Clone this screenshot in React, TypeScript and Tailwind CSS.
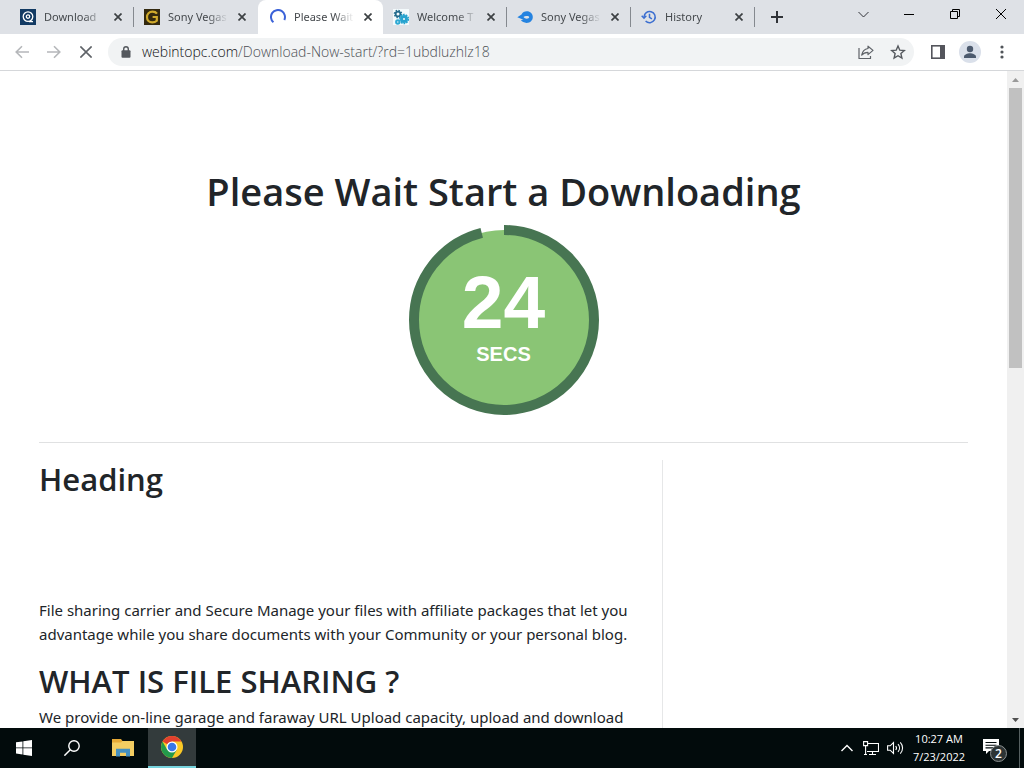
import type { ReactNode } from 'react';

interface Tab {
  title: string;
  icon: ReactNode;
  active?: boolean;
  separator?: boolean;
}

const tabs: Tab[] = [
  {
    title: 'Download',
    separator: true,
    icon: (
      <svg className="w-4 h-4 shrink-0" viewBox="0 0 16 16">
        <rect width="16" height="16" fill="#123a63" />
        <circle cx="8" cy="7.6" r="4.800" fill="none" stroke="#fff" strokeWidth="1.3" />
        <circle cx="8" cy="7.6" r="1.7" fill="none" stroke="#fff" strokeWidth="1.3" />
        <path d="M9 12.6h4" stroke="#fff" strokeWidth="1.3" />
      </svg>
    ),
  },
  {
    title: 'Sony Vegas',
    icon: (
      <svg className="w-4 h-4 shrink-0" viewBox="0 0 16 16">
        <rect width="16" height="16" fill="#33290f" />
        <path d="M13 4.6C12 3.2 10.300 2.600 8.500 2.600 5.200 2.600 3 5 3 8.200s2.200 5.200 5.300 5.200c1.800 0 3.400-.6 4.500-1.600V8H8.600" fill="none" stroke="#d0aa2c" strokeWidth="2.200" />
      </svg>
    ),
  },
  {
    title: 'Please Wait',
    active: true,
    icon: (
      <svg className="w-4 h-4 shrink-0" viewBox="0 0 16 16">
        <path d="M3.400 13.300A7 7 0 1 1 14.300 11" fill="none" stroke="#3b62d8" strokeWidth="2" />
      </svg>
    ),
  },
  {
    title: 'Welcome T',
    separator: true,
    icon: (
      <svg className="w-4 h-4 shrink-0" viewBox="0 0 16 16">
        <rect width="16" height="16" fill="#f4fafc" />
        <circle cx="5" cy="5" r="2.400" fill="none" stroke="#236a8c" strokeWidth="1.800" />
        <circle cx="5" cy="5" r="3.700" fill="none" stroke="#236a8c" strokeWidth="1.200" strokeDasharray="1.500 1.400" />
        <circle cx="11" cy="10" r="2.500" fill="none" stroke="#27a3cf" strokeWidth="3" />
        <circle cx="11" cy="10" r="4.500" fill="none" stroke="#27a3cf" strokeWidth="1.400" strokeDasharray="1.800 1" />
        <circle cx="4.800" cy="13" r="1.700" fill="none" stroke="#2fa9d3" strokeWidth="2" />
      </svg>
    ),
  },
  {
    title: 'Sony Vegas',
    separator: true,
    icon: (
      <svg className="w-4 h-4 shrink-0" viewBox="0 0 16 16">
        <path fillRule="evenodd" d="M.3 8.300 4.500 5.400C5.600 3.400 7.400 2.300 9.800 2.300c3.500 0 6 2.500 6 5.800 0 3.500-2.600 5.800-6.200 5.800-2.500 0-4.600-1-5.700-2.800l2.600-.4L.3 8.300Zm6.200-.3c1-.8 2-1 3.200-1 1.600 0 2.500.5 2.500 1.300 0 .9-1 1.400-2.500 1.400-1.300 0-2.300-.7-3.200-1.700Z" fill="#2583e0" />
      </svg>
    ),
  },
  {
    title: 'History',
    separator: true,
    icon: (
      <svg className="w-4 h-4 shrink-0" viewBox="0 0 16 16" fill="none" stroke="#3c6fd0" strokeWidth="1.500">
        <path d="M3 8a5.600 5.600 0 1 1 1.600 4" />
        <path d="M.7 6.800 3 9.200l2.300-2.400M8.500 4.800v3.500l2.400 1.500" />
      </svg>
    ),
  },
];

const TOTAL_SECONDS = 25;
const secondsLeft = 24;

function TabItem({ tab }: { tab: Tab }) {
  return (
    <div
      className={
        tab.active
          ? 'w-[125px] h-[34px] flex items-center pl-3 bg-white rounded-t-lg'
          : 'w-[124px] h-[34px] flex items-center pl-[10px]'
      }
    >
      {tab.icon}
      <a href="#" className="w-[60px] ml-2 font-['Noto_Sans',sans-serif] text-[11px] leading-5 text-[#45494d] whitespace-nowrap [mask-image:linear-gradient(to_right,#000_40px,transparent_60px)]">
        {tab.title}
      </a>
      <button aria-label={`Close ${tab.title}`} className="w-4 h-4 ml-[6px] flex items-center justify-center shrink-0">
        <svg className="w-2 h-2" viewBox="0 0 8 8" stroke="#3c4043" strokeWidth="1.700">
          <path d="M.5.5l7 7M7.500.5l-7 7" />
        </svg>
      </button>
      {tab.separator && <span className="ml-auto w-px h-5 bg-[#85898f]" />}
    </div>
  );
}

function TabStrip() {
  return (
    <header className="h-[34px] shrink-0 flex items-center bg-[#dee1e6] pl-[10px]">
      {tabs.map((tab, i) => (
        <TabItem key={i} tab={tab} />
      ))}
      <button aria-label="New tab" className="w-7 h-7 ml-2 flex items-center justify-center">
        <svg className="w-3 h-3" viewBox="0 0 12 12" stroke="#303338" strokeWidth="2">
          <path d="M6 0v12M0 6h12" />
        </svg>
      </button>
      <div className="ml-auto flex h-7 self-start">
        <button aria-label="Search tabs" className="w-[46px] flex items-center justify-center">
          <svg className="w-[11px] h-[11px]" viewBox="0 0 11 11" fill="none" stroke="#303338">
            <path d="M.5 3l5 5 5-5" />
          </svg>
        </button>
        <button aria-label="Minimize" className="w-[46px] flex items-center justify-center">
          <svg className="w-[10px] h-[10px]" viewBox="0 0 10 10" stroke="#000">
            <path d="M0 5.500h10" />
          </svg>
        </button>
        <button aria-label="Restore" className="w-[46px] flex items-center justify-center">
          <svg className="w-[10px] h-[10px]" viewBox="0 0 10 10" fill="none" stroke="#000">
            <path d="M.5 2.500h7v7h-7zM2.500 2.500v-2h7v7h-2" />
          </svg>
        </button>
        <button aria-label="Close window" className="w-[46px] flex items-center justify-center">
          <svg className="w-[10px] h-[10px]" viewBox="0 0 10 10" stroke="#000">
            <path d="M0 0l10 10M10 0L0 10" />
          </svg>
        </button>
      </div>
    </header>
  );
}

function Toolbar() {
  return (
    <div className="h-[37px] shrink-0 flex items-center bg-white border-b border-[#d5d7da] pl-[6px] pr-[6px]">
      <button aria-label="Back" className="w-8 h-7 flex items-center justify-center">
        <svg className="w-[14px] h-[14px]" viewBox="0 0 14 14" fill="none" stroke="#b5b7ba" strokeWidth="1.600">
          <path d="M14 7H1.500M7 1.200L1.200 7 7 12.800" />
        </svg>
      </button>
      <button aria-label="Forward" className="w-8 h-7 flex items-center justify-center">
        <svg className="w-[14px] h-[14px]" viewBox="0 0 14 14" fill="none" stroke="#b5b7ba" strokeWidth="1.600">
          <path d="M0 7h12.500M7 1.200L12.800 7 7 12.800" />
        </svg>
      </button>
      <button aria-label="Stop" className="w-8 h-7 flex items-center justify-center">
        <svg className="w-3 h-3" viewBox="0 0 12 12" stroke="#5f6368" strokeWidth="1.600">
          <path d="M.4.4l11.200 11.200M11.600.4L.4 11.600" />
        </svg>
      </button>
      <div className="flex-1 h-7 ml-[6px] flex items-center bg-[#f1f3f4] rounded-full pl-[13px]">
        <svg className="w-[10px] h-3 shrink-0" viewBox="0 0 10 12">
          <rect x=".5" y="4.300" width="9" height="7.400" rx="1" fill="#54585d" />
          <path d="M2.700 5V3a2.300 2.300 0 0 1 4.600 0v2" fill="none" stroke="#54585d" strokeWidth="1.400" />
        </svg>
        <a href="#" aria-label="Address" className="flex-1 ml-[11px] text-[14px] leading-5 font-light text-[#4c5054] whitespace-nowrap">
          <span className="text-[#101113]">webintopc.com</span>/Download-Now-start/?rd=1ubdluzhlz18
        </a>
        <button aria-label="Share" className="w-8 h-7 flex items-center justify-center">
          <svg className="w-4 h-4" viewBox="0 0 16 16" fill="none" stroke="#5f6368" strokeWidth="1.200" strokeLinejoin="round">
            <path d="M1 4v10.500h11.500V12" />
            <path d="M10 2.200l5 4.200-5 4.200V8.400c-2.800 0-4.800.8-6.300 2.800C4.300 7.500 6.300 5 10 4.500z" />
          </svg>
        </button>
        <button aria-label="Bookmark" className="w-8 h-7 flex items-center justify-center">
          <svg className="w-4 h-4" viewBox="0 0 16 16" fill="none" stroke="#54585d" strokeWidth="1.400">
            <path d="M8 2l1.800 4.200 4.500.4-3.400 3 1 4.400L8 11.700 4.100 14l1-4.400-3.400-3 4.500-.4z" />
          </svg>
        </button>
      </div>
      <button aria-label="Side panel" className="w-8 h-7 ml-2 flex items-center justify-center">
        <svg className="w-[14px] h-[14px]" viewBox="0 0 14 14">
          <rect x=".8" y=".8" width="12.400" height="12.400" fill="none" stroke="#54555c" strokeWidth="1.600" />
          <rect x="9" y="0" width="5" height="14" fill="#54555c" />
        </svg>
      </button>
      <button aria-label="Profile" className="w-8 h-7 flex items-center justify-center">
        <svg className="w-[22px] h-[22px]" viewBox="0 0 22 22">
          <circle cx="11" cy="11" r="11" fill="#dae0ea" />
          <circle cx="11" cy="8" r="3.200" fill="#4c5a6e" />
          <path d="M5 17v-1.500c0-2 3.500-3.300 6-3.300s6 1.300 6 3.300V17z" fill="#4c5a6e" />
        </svg>
      </button>
      <button aria-label="Menu" className="w-8 h-7 flex items-center justify-center">
        <svg className="w-1 h-[14px]" viewBox="0 0 4 14" fill="#505459">
          <circle cx="2" cy="2" r="1.600" />
          <circle cx="2" cy="7" r="1.600" />
          <circle cx="2" cy="12" r="1.600" />
        </svg>
      </button>
    </div>
  );
}

function Countdown() {
  return (
    <div className="w-[190px] h-[190px] mx-auto grid place-items-center">
      <svg className="w-[190px] h-[190px] col-start-1 row-start-1" viewBox="0 0 190 190">
        <circle cx="95" cy="95" r="90" fill="#8ac575" />
        <circle
          cx="95"
          cy="95"
          r="90"
          fill="none"
          stroke="#477552"
          strokeWidth="10"
          pathLength={TOTAL_SECONDS}
          strokeDasharray={`${secondsLeft} ${TOTAL_SECONDS - secondsLeft}`}
          transform="rotate(-90 95 95)"
        />
      </svg>
      <div className="col-start-1 row-start-1 pb-3 text-center text-white font-bold font-['Liberation_Sans',sans-serif]">
        <div className="text-[75px] leading-[80px]">{secondsLeft}</div>
        <div className="text-[20px] leading-6">SECS</div>
      </div>
    </div>
  );
}

function Scrollbar() {
  return (
    <div className="w-[17px] shrink-0 flex flex-col items-center bg-[#f0f0f0]">
      <button aria-label="Scroll up" className="w-full h-[17px] flex items-center justify-center">
        <svg className="w-[7px] h-1" viewBox="0 0 7 4" fill="#9a9a9a">
          <path d="M0 4L3.500 0 7 4z" />
        </svg>
      </button>
      <div className="flex-1 w-[13px]">
        <div className="h-[45%] bg-[#c1c1c1]" />
      </div>
      <button aria-label="Scroll down" className="w-full h-[17px] flex items-center justify-center">
        <svg className="w-[7px] h-1" viewBox="0 0 7 4" fill="#505050">
          <path d="M0 0L3.500 4 7 0z" />
        </svg>
      </button>
    </div>
  );
}

function Taskbar() {
  return (
    <footer className="h-10 shrink-0 flex items-stretch bg-[#020b0c] text-white">
      <button aria-label="Start" className="w-12 flex items-center justify-center">
        <svg className="w-4 h-4" viewBox="0 0 16 16" fill="#fff">
          <path d="M0 2.300l6.500-.9v6.100H0zM7.300 1.300L16 0v7.500H7.300zM0 8.300h6.500v6.200L0 13.600zM7.300 8.300H16V16l-8.700-1.300z" />
        </svg>
      </button>
      <button aria-label="Search" className="w-12 flex items-center justify-center">
        <svg className="w-4 h-4" viewBox="0 0 16 16" fill="none" stroke="#fff" strokeWidth="1.400">
          <circle cx="10" cy="6" r="5.200" />
          <path d="M6.300 9.800L.4 15.700" />
        </svg>
      </button>
      <button aria-label="File Explorer" className="w-12 ml-[3px] flex items-center justify-center">
        <svg className="w-[22px] h-[18px]" viewBox="0 0 22 18">
          <path d="M0 0h9l1.500 2H21v15H0z" fill="#e5a936" />
          <path d="M0 3.500h9L10.500 2H22v15H0z" fill="#f3cd62" />
          <path d="M4 17.500v-7.700h14v7.700h-4v-3.700H8v3.700z" fill="#4590c0" />
        </svg>
      </button>
      <button aria-label="Google Chrome" className="w-12 ml-px flex items-center justify-center bg-[#333b3c] border-b-2 border-[#76d3dd]">
        <svg className="w-[22px] h-[22px]" viewBox="0 0 22 22">
          <circle cx="11" cy="11" r="11" fill="#fbc926" />
          <path d="M11 11L1.500 5.500A11 11 0 0 1 20.500 5.500H11z" fill="#e2402f" />
          <path d="M1.500 5.500A11 11 0 0 0 11 22l4.800-8.300L11 11 6.200 13.700z" fill="#239a4b" />
          <circle cx="11" cy="11" r="5.500" fill="#fff" />
          <circle cx="11" cy="11" r="4.300" fill="#3977e8" />
        </svg>
      </button>
      <div className="ml-auto flex items-center">
        <button aria-label="Show hidden icons" className="w-6 h-10 flex items-center justify-center">
          <svg className="w-3 h-2" viewBox="0 0 12 8" fill="none" stroke="#fff" strokeWidth="1.400">
            <path d="M.5 7L6 1.500 11.500 7" />
          </svg>
        </button>
        <button aria-label="Network" className="w-6 h-10 flex items-center justify-center">
          <svg className="w-4 h-[15px]" viewBox="0 0 16 15" fill="none" stroke="#fff" strokeWidth="1.100">
            <path d="M5 2.500h10.500v8H4M9.500 10.500v3M6 13.500h7M.6.600h4v4h-4zM2.600 4.600v9M1 13.500h3" />
          </svg>
        </button>
        <button aria-label="Volume" className="w-6 h-10 flex items-center justify-center">
          <svg className="w-[17px] h-[14px]" viewBox="0 0 17 14" fill="none" stroke="#fff" strokeWidth="1.100">
            <path d="M.6 4.800h2.600L6.500 1.500v11L3.200 9.200H.6zM8.700 5c1 1.200 1 2.800 0 4M11 3.200c2 2.200 2 5.400 0 7.600M13.300 1.300c3 3.200 3 8.200 0 11.400" />
          </svg>
        </button>
        <button className="w-16 text-center text-[11px] leading-[18px] whitespace-nowrap">
          10:27 AM
          <br />
          7/23/2022
        </button>
        <button aria-label="Notifications" className="w-10 h-10 ml-1 flex items-center justify-center">
          <svg className="w-6 h-6 mt-1" viewBox="0 0 24 24">
            <path d="M0 1h16v12H6l-3 3v-3H0z" fill="#fff" />
            <path d="M2.500 4.500h11M2.500 7.200h11M2.500 9.900h8" stroke="#020b0c" strokeWidth="1.100" />
            <circle cx="15.500" cy="15.500" r="8" fill="#2d3435" stroke="#8b9091" />
            <text x="15.500" y="20" textAnchor="middle" fontSize="12" fontWeight="600" fill="#fff">2</text>
          </svg>
        </button>
        <span className="w-px h-10 ml-1 mr-1 bg-[#566061]" />
      </div>
    </footer>
  );
}

export default function App() {
  return (
    <div className="h-screen flex flex-col overflow-hidden bg-white font-['Open_Sans','Noto_Sans',sans-serif]">
      <TabStrip />
      <Toolbar />
      <div className="flex-1 min-h-0 flex">
        <main className="flex-1 min-w-0 overflow-hidden px-[39px] pt-24 text-[#212529]">
          <h1 className="text-center text-[38px] leading-[48px] font-semibold">Please Wait Start a Downloading</h1>
          <div className="pt-[10px] pb-[27px]">
            <Countdown />
          </div>
          <hr className="border-[#e0e1e2]" />
          <div className="flex mt-[17px]">
            <div className="w-[624px] pr-6 pb-10 border-r border-[#e6e7e8]">
              <h2 className="text-[31px] leading-[38px] font-semibold">Heading</h2>
              <p className="mt-[100px] font-['Noto_Sans',sans-serif] text-[15px] leading-6">
                File sharing carrier and Secure Manage your files with affiliate packages that let you
                advantage while you share documents with your Community or your personal blog.
              </p>
              <h2 className="mt-4 text-[31px] leading-[38px] font-semibold">WHAT IS FILE SHARING ?</h2>
              <p className="mt-[5px] font-['Noto_Sans',sans-serif] text-[15px] leading-6">
                We provide on-line garage and faraway URL Upload capacity, upload and download
              </p>
            </div>
            <aside className="flex-1" />
          </div>
        </main>
        <Scrollbar />
      </div>
      <Taskbar />
    </div>
  );
}
